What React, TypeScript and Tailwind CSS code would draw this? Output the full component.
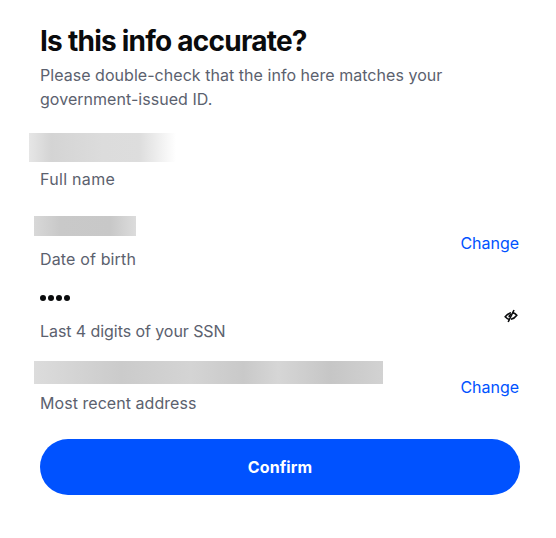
export default function App() {
  const label = "text-[16px] leading-6 text-[#5b616e]";
  const change = "text-[16px] leading-6 text-[#0052ff] mr-[1px] -translate-y-[1px] tracking-[-0.03px]";
  return (
    <div className="w-[556px] h-[538px] bg-white font-['Inter','Liberation_Sans',sans-serif] pt-[23px] pl-[40px] pr-[36px] flex flex-col">
      <h1 className="text-[28px] leading-9 font-bold tracking-[-0.76px] text-[#0a0b0d]">Is this info accurate?</h1>
      <p className="mt-[4px] w-[440px] text-[16px] leading-6 text-[#5b616e] tracking-[0.04px]">
        Please double-check that the info here matches your government-issued ID.
      </p>

      <div className="mt-[22px]">
        <div className="-ml-[11px] w-[147px] h-[29px] bg-[linear-gradient(90deg,#e6e6e6_0%,#d4d4d4_15%,#dcdcdc_50%,#dddddd_75%,#ffffff_100%)]" />
        <div className={`mt-[5px] ${label} tracking-[0.3px]`}>Full name</div>
      </div>

      <div className="mt-[25px] flex items-center justify-between">
        <div>
          <div className="-ml-[6px] w-[102px] h-[20px] bg-[linear-gradient(90deg,#d8d8d8_0%,#c9c9c9_25%,#c8c8c8_75%,#dcdcdc_100%)]" />
          <div className={`mt-[11px] ${label} tracking-[0.15px]`}>Date of birth</div>
        </div>
        <span className={change}>Change</span>
      </div>

      <div className="mt-[18px] flex items-center justify-between">
        <div>
          <div className="flex h-[18px] items-center gap-[2px]">
            <span className="size-[6px] rounded-full bg-[#0a0b0d]" />
            <span className="size-[6px] rounded-full bg-[#0a0b0d]" />
            <span className="size-[6px] rounded-full bg-[#0a0b0d]" />
            <span className="size-[6px] rounded-full bg-[#0a0b0d]" />
          </div>
          <div className={`mt-[12px] ${label} tracking-[-0.07px]`}>Last 4 digits of your SSN</div>
        </div>
        <svg width="14" height="14" viewBox="0 0 14 14" fill="none" className="mr-[2px]" stroke="#0a0b0d" strokeWidth="1.6">
          <path d="M5.5 10.5C3.8 10.2 2.5 9.2 1.2 7.8C2.8 5.6 4.6 4.2 7 3.8" />
          <path d="M8.5 3.6C10.2 3.9 11.6 4.8 12.8 6.2C11.2 8.4 9.4 9.9 7 10.3" />
          <path d="M10 1L4.2 13" />
          <path d="M5.2 8.2C5 6.8 6 5.6 7.4 5.4" />
        </svg>
      </div>

      <div className="mt-[18px] flex items-center justify-between">
        <div>
          <div className="-ml-[6px] w-[349px] h-[23px] bg-[linear-gradient(90deg,#dcdcdc_0%,#cbcbcb_25%,#d4d4d4_45%,#c9c9c9_60%,#d6d6d6_70%,#c6c6c6_85%,#d2d2d2_100%)]" />
          <div className={`mt-[7px] ${label} tracking-[0.05px]`}>Most recent address</div>
        </div>
        <span className={change}>Change</span>
      </div>

      <button className="mt-[24px] w-[480px] h-[56px] rounded-full bg-[#0052ff] text-white text-[16px] font-bold tracking-[0.1px]">
        Confirm
      </button>
    </div>
  );
}
